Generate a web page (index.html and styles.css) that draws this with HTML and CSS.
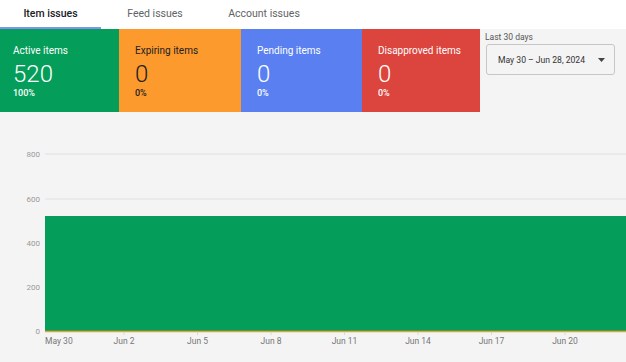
FILE: index.html
```html
<!DOCTYPE html>
<html lang="en">
<head>
    <meta charset="UTF-8">
    <meta name="viewport" content="width=device-width, initial-scale=1.0">
    <title>Item issues</title>
    <link rel="stylesheet" href="styles.css">
</head>
<body>
    <div class="tabs">
        <div class="tab active">Item issues</div>
        <div class="tab">Feed issues</div>
        <div class="tab">Account issues</div>
    </div>

    <div class="summary">
        <div class="card green">
            <div class="label">Active items</div>
            <div class="count">520</div>
            <div class="pct">100%</div>
        </div>
        <div class="card orange">
            <div class="label">Expiring items</div>
            <div class="count">0</div>
            <div class="pct">0%</div>
        </div>
        <div class="card blue">
            <div class="label">Pending items</div>
            <div class="count">0</div>
            <div class="pct">0%</div>
        </div>
        <div class="card red">
            <div class="label">Disapproved items</div>
            <div class="count">0</div>
            <div class="pct">0%</div>
        </div>
        <div class="range">
            <div class="range-label">Last 30 days</div>
            <div class="picker">
                <span>May 30 – Jun 28, 2024</span>
                <svg width="7" height="4" viewBox="0 0 7 4"><path d="M0 0h7L3.5 4z" fill="#444"/></svg>
            </div>
        </div>
    </div>

    <div class="chart">
        <svg width="626" height="249" viewBox="0 0 626 249">
            <g class="grid">
                <line x1="45" y1="41" x2="626" y2="41"/>
                <line x1="45" y1="86" x2="626" y2="86"/>
                <line x1="45" y1="130" x2="626" y2="130"/>
                <line x1="45" y1="174" x2="626" y2="174"/>
            </g>
            <g class="ylabels">
                <text x="40" y="44">800</text>
                <text x="40" y="89">600</text>
                <text x="40" y="133">400</text>
                <text x="40" y="177">200</text>
                <text x="40" y="221">0</text>
            </g>
            <rect x="45" y="103" width="581" height="115" fill="#049e5a"/>
            <line x1="45" y1="218.5" x2="626" y2="218.5" stroke="#e7a23a" stroke-width="1.5"/>
            <g class="ticks">
                <line x1="124" y1="219" x2="124" y2="222"/>
                <line x1="197.5" y1="219" x2="197.5" y2="222"/>
                <line x1="271" y1="219" x2="271" y2="222"/>
                <line x1="344.5" y1="219" x2="344.5" y2="222"/>
                <line x1="418" y1="219" x2="418" y2="222"/>
                <line x1="491.5" y1="219" x2="491.5" y2="222"/>
                <line x1="565" y1="219" x2="565" y2="222"/>
            </g>
            <g class="xlabels">
                <text x="45" y="231" class="first">May 30</text>
                <text x="124" y="231">Jun 2</text>
                <text x="197.5" y="231">Jun 5</text>
                <text x="271" y="231">Jun 8</text>
                <text x="344.5" y="231">Jun 11</text>
                <text x="418" y="231">Jun 14</text>
                <text x="491.5" y="231">Jun 17</text>
                <text x="565" y="231">Jun 20</text>
            </g>
        </svg>
    </div>
</body>
</html>
```

FILE: styles.css
```css
body {
    margin: 0;
    font-family: Roboto, "Liberation Sans", sans-serif;
    background: #f4f4f4;
    width: 626px;
    height: 362px;
    overflow: hidden;
}

/* tabs */
.tabs {
    display: flex;
    height: 29px;
    background: #fff;
}
.tab {
    box-sizing: border-box;
    height: 29px;
    padding-top: 7px;
    font-size: 10.5px;
    color: #5f6368;
    text-align: center;
    border-bottom: 2px solid transparent;
}
.tab:nth-child(1) { width: 101px; }
.tab:nth-child(2) { width: 108px; }
.tab:nth-child(3) { width: 110px; }
.tab.active {
    color: #202124;
    font-weight: 500;
    border-bottom-color: #7c95f2;
}

/* summary cards */
.summary {
    display: flex;
    height: 84px;
}
.card {
    box-sizing: border-box;
    height: 83px;
    padding: 15px 0 0 16px;
    color: #fff;
}
.card.green { width: 119px; background: #049e5a; padding-left: 13px; }
.card.orange { width: 122px; background: #fd9a2d; color: #202124; }
.card.blue { width: 121px; background: #5a7ff0; }
.card.red { width: 118px; background: #dc443e; }
.label {
    font-size: 10px;
    line-height: 13px;
}
.count {
    font-size: 24px;
    font-weight: 300;
    line-height: 26px;
    margin-top: 4px;
}
.pct {
    font-size: 9px;
    font-weight: 500;
    line-height: 11px;
    margin-top: 1px;
}

.range {
    flex: 1;
    padding: 3px 0 0 5px;
}
.range-label {
    font-size: 8.5px;
    color: #555;
    line-height: 10px;
}
.picker {
    box-sizing: border-box;
    width: 129px;
    height: 31px;
    margin: 2px 0 0 1px;
    border: 1px solid #c6c6c6;
    border-radius: 3px;
    display: flex;
    align-items: center;
    justify-content: space-between;
    padding: 0 9px 0 11px;
    font-size: 8.6px;
    color: #333;
}

/* chart */
.chart {
    height: 249px;
}
.chart svg {
    display: block;
}
.grid line {
    stroke: #e0e0e0;
    stroke-width: 1;
}
.ticks line {
    stroke: #d8d8d8;
}
.ylabels text {
    font-size: 8px;
    fill: #999;
    text-anchor: end;
}
.xlabels text {
    font-size: 8.5px;
    fill: #777;
    text-anchor: middle;
}
.xlabels text.first {
    text-anchor: start;
}
```
